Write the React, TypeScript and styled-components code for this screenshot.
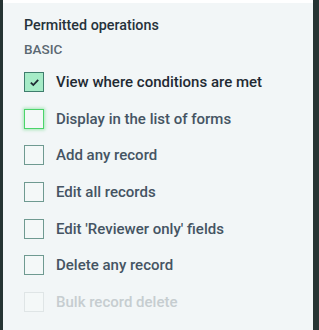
import React from "react";
import styled, { createGlobalStyle, css } from "styled-components";

const Global = createGlobalStyle`
  html, body { margin: 0; padding: 0; background: #263433; }
  body { width: 319px; height: 330px; overflow: hidden; }
`;

const Frame = styled.div`
  display: flex;
  height: 330px;
  padding-left: 3px;
  padding-right: 6px;
  box-sizing: border-box;
`;

const Panel = styled.section`
  flex: 1;
  background: #f2f6f7;
  border-top: 3px solid #ffffff;
  padding: 12px 0 0 21px;
  font-family: Roboto, "Open Sans", sans-serif;
  box-sizing: border-box;
`;

const Title = styled.h2`
  margin: 0;
  font-size: 14.3px;
  font-weight: 500;
  color: #26323b;
  line-height: 21px;
`;

const Section = styled.div`
  margin-top: 4px;
  font-size: 13.5px;
  font-weight: 500;
  color: #5b6872;
  line-height: 18px;
`;

const List = styled.div`
  margin-top: 14px;
  display: flex;
  flex-direction: column;
  gap: 16.7px;
`;

type State = "checked" | "focus" | "normal" | "disabled";

const textColor: Record<State, string> = {
  checked: "#1f2a33",
  focus: "#455463",
  normal: "#455463",
  disabled: "#c6cdd0",
};

const Row = styled.label<{ $state: State }>`
  display: flex;
  align-items: center;
  gap: 12px;
  height: 20px;
  font-size: 15px;
  font-weight: 500;
  color: ${(p) => textColor[p.$state]};
`;

const Box = styled.span<{ $state: State }>`
  width: 20px;
  height: 20px;
  box-sizing: border-box;
  border: 1px solid #6f9a91;
  background: #f4f8f8;
  display: flex;
  align-items: center;
  justify-content: center;
  flex-shrink: 0;
  ${(p) =>
    p.$state === "checked" &&
    css`
      background: #a6ebc7;
      border-color: #3f7d6d;
    `}
  ${(p) =>
    p.$state === "focus" &&
    css`
      border-color: #4bd46a;
      box-shadow: 0 0 3px 1px rgba(75, 212, 106, 0.45);
    `}
  ${(p) =>
    p.$state === "disabled" &&
    css`
      border-color: #dfe5e6;
    `}
`;

const items: { label: string; state: State }[] = [
  { label: "View where conditions are met", state: "checked" },
  { label: "Display in the list of forms", state: "focus" },
  { label: "Add any record", state: "normal" },
  { label: "Edit all records", state: "normal" },
  { label: "Edit 'Reviewer only' fields", state: "normal" },
  { label: "Delete any record", state: "normal" },
  { label: "Bulk record delete", state: "disabled" },
];

export default function App() {
  return (
    <>
      <Global />
      <Frame>
        <Panel>
          <Title>Permitted operations</Title>
          <Section>BASIC</Section>
          <List>
            {items.map((it) => (
              <Row key={it.label} $state={it.state}>
                <Box $state={it.state}>
                  {it.state === "checked" && (
                    <svg width="11" height="9" viewBox="0 0 11 9">
                      <path d="M1.8 4.6 L4.3 7 L9.2 1.8" fill="none" stroke="#1f2a33" strokeWidth="1.8" />
                    </svg>
                  )}
                </Box>
                {it.label}
              </Row>
            ))}
          </List>
        </Panel>
      </Frame>
    </>
  );
}
